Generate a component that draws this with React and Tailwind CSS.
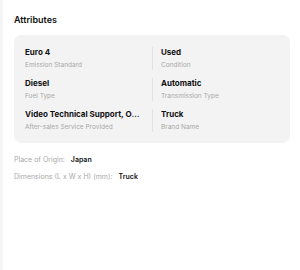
import React from "react";

const attrs = [
  { value: "Euro 4", label: "Emission Standard" },
  { value: "Used", label: "Condition" },
  { value: "Diesel", label: "Fuel Type" },
  { value: "Automatic", label: "Transmission Type" },
  { value: "Video Technical Support, Online Support", label: "After-sales Service Provided" },
  { value: "Truck", label: "Brand Name" },
];

function AttrCell({ item, right }) {
  return (
    <div className={`min-w-0 ${right ? "border-l border-[#e2e2e2] pl-[8px]" : "pr-[8px]"}`}>
      <div className="truncate text-[8px] font-bold leading-[11px] text-[#111]">
        {item.value}
      </div>
      <div className="mt-[3px] truncate text-[6.5px] leading-[9px] text-[#a8a8a8]">
        {item.label}
      </div>
    </div>
  );
}

export default function App() {
  return (
    <div
      className="flex h-[270px] w-[300px] bg-white"
      style={{ fontFamily: "Inter, 'Noto Sans', sans-serif" }}
    >
      <div className="w-[3px] shrink-0 bg-[#f4f4f4]" />
      <div className="flex-1 pl-[11px] pr-[10px] pt-[13px]">
        <h2 className="text-[9px] font-semibold leading-[14px] text-[#111]">Attributes</h2>
        <div className="mt-[8px] rounded-[7px] bg-[#f3f3f3] px-[11px] pb-[11px] pt-[12px]">
          <div className="grid grid-cols-[127px_1fr] gap-y-[8px]">
            {attrs.map((a, i) => (
              <AttrCell key={a.label} item={a} right={i % 2 === 1} />
            ))}
          </div>
        </div>
        <div className="mt-[12px] flex flex-col gap-[7px] text-[7px] leading-[10px]">
          <div>
            <span className="text-[#a8a8a8]">Place of Origin:</span>
            <span className="ml-[6px] font-semibold text-[#111]">Japan</span>
          </div>
          <div>
            <span className="text-[#a8a8a8]">Dimensions (L x W x H) (mm):</span>
            <span className="ml-[6px] font-semibold text-[#111]">Truck</span>
          </div>
        </div>
      </div>
    </div>
  );
}
